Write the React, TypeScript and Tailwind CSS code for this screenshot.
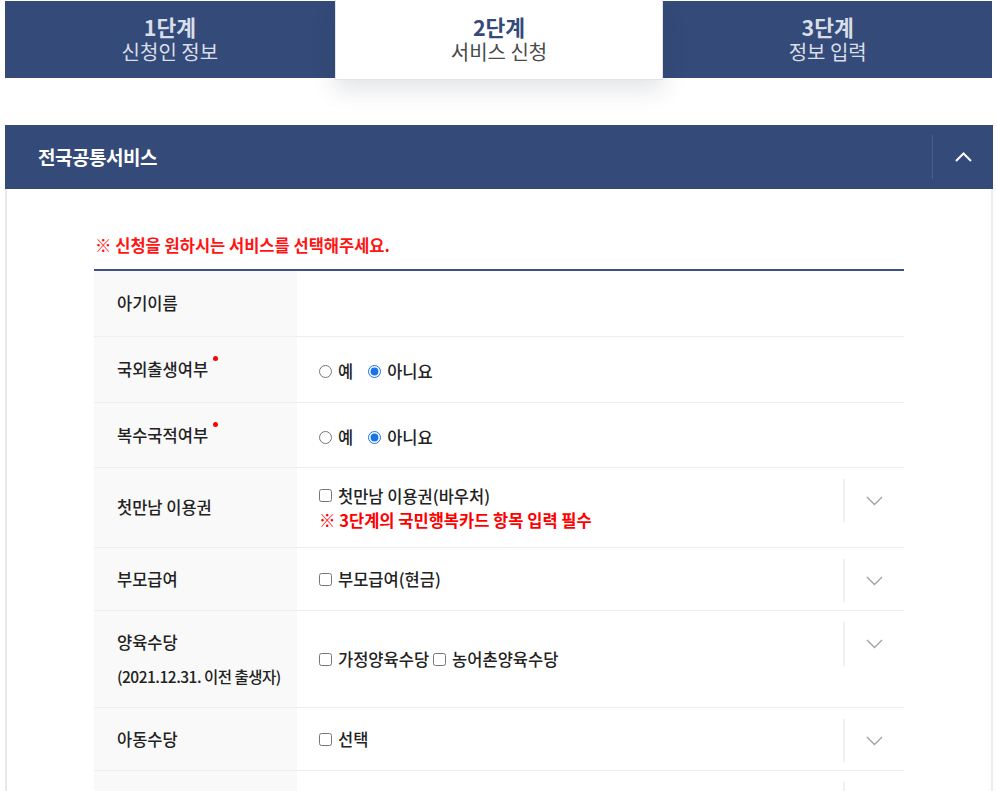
import React from 'react';

const font = "font-['Noto_Sans_CJK_KR','Noto_Sans',sans-serif]";

type Row = {
  label: React.ReactNode;
  required?: boolean;
  h: string;
  content?: React.ReactNode;
  dropdown?: boolean;
};

function Radio({ checked, label, name }: { checked?: boolean; label: string; name: string }) {
  return (
    <label className="flex items-center gap-[6px]">
      <input type="radio" name={name} defaultChecked={checked} className="m-0 h-[13px] w-[13px] accent-[#1a73e8]" />
      <span>{label}</span>
    </label>
  );
}

function Check({ label }: { label: string }) {
  return (
    <label className="flex items-center gap-[6px]">
      <input type="checkbox" className="m-0 h-[13px] w-[13px]" />
      <span>{label}</span>
    </label>
  );
}

function ChevronDown() {
  return (
    <svg width="17" height="10" viewBox="0 0 17 10" fill="none">
      <polyline points="1,1 8.5,8.5 16,1" stroke="#a0a0a0" strokeWidth="1.3" />
    </svg>
  );
}

const rows: Row[] = [
  { label: '아기이름', h: 'h-[66px]' },
  {
    label: '국외출생여부',
    required: true,
    h: 'h-[66px]',
    content: (
      <div className="flex items-center gap-[15px] pt-[4px]">
        <Radio name="r1" label="예" />
        <Radio name="r1" label="아니요" checked />
      </div>
    ),
  },
  {
    label: '복수국적여부',
    required: true,
    h: 'h-[65px]',
    content: (
      <div className="flex items-center gap-[15px] pt-[4px]">
        <Radio name="r2" label="예" />
        <Radio name="r2" label="아니요" checked />
      </div>
    ),
  },
  {
    label: '첫만남 이용권',
    h: 'h-[80px]',
    dropdown: true,
    content: (
      <div className="flex flex-col leading-[24px]">
        <Check label="첫만남 이용권(바우처)" />
        <p className="font-bold text-[#ff0000]">※ 3단계의 국민행복카드 항목 입력 필수</p>
      </div>
    ),
  },
  { label: '부모급여', h: 'h-[63px]', dropdown: true, content: <Check label="부모급여(현금)" /> },
  {
    label: (
      <div className="flex flex-col leading-[34px]">
        <span>양육수당</span>
        <span className="whitespace-nowrap text-[15.5px] tracking-[-0.5px]">(2021.12.31. 이전 출생자)</span>
      </div>
    ),
    h: 'h-[97px]',
    dropdown: true,
    content: (
      <div className="flex items-center gap-[4px]">
        <Check label="가정양육수당" />
        <Check label="농어촌양육수당" />
      </div>
    ),
  },
  { label: '아동수당', h: 'h-[63px]', dropdown: true, content: <Check label="선택" /> },
  { label: '', h: 'h-[63px]', dropdown: true },
];

export default function App() {
  return (
    <div className={`${font} w-[997px] h-[791px] overflow-hidden bg-white`}>
      {/* step tabs */}
      <div className="flex px-[5px] pt-[1px]">
        <div className="flex h-[77px] w-[330px] flex-col items-center justify-center pb-[2px] bg-[#344a78] text-[#d9dee8]">
          <span className="text-[21.5px] font-bold leading-[25px]">1단계</span>
          <span className="text-[20px] leading-[25px]">신청인 정보</span>
        </div>
        <div className="relative z-10 -mt-[1px] flex h-[80px] w-[329px] flex-col items-center justify-center pb-[2px] border border-t-0 border-[#e2e4e8] bg-white shadow-[0_10px_22px_rgba(40,50,80,0.13)]">
          <span className="text-[21.5px] font-bold leading-[25px] text-[#344a78]">2단계</span>
          <span className="text-[20px] leading-[25px] text-[#4a4a4a]">서비스 신청</span>
        </div>
        <div className="flex h-[77px] w-[329px] flex-col items-center justify-center pb-[2px] bg-[#344a78] text-[#d9dee8]">
          <span className="text-[21.5px] font-bold leading-[25px]">3단계</span>
          <span className="text-[20px] leading-[25px]">정보 입력</span>
        </div>
      </div>

      {/* panel */}
      <div className="mx-[5px] mt-[45px] w-[988px]">
        <div className="flex h-[64px] items-center bg-[#344a78]">
          <h2 className="flex-1 pl-[33px] text-[19px] font-bold tracking-[-0.5px] text-white">전국공통서비스</h2>
          <div className="flex h-[44px] w-[61px] items-center justify-center border-l border-[#4a5e88]">
            <svg width="17" height="10" viewBox="0 0 17 10" fill="none">
              <polyline points="1,9 8.5,1.5 16,9" stroke="#ffffff" strokeWidth="2" />
            </svg>
          </div>
        </div>

        <div className="border-x-2 border-l-[#e8e8e8] border-r-[#ececec] px-[87px] pt-[45px] pb-10">
          <p className="pl-[1px] text-[16.5px] font-semibold leading-[22px] text-[#ff1414]">
            ※ 신청을 원하시는 서비스를 선택해주세요.
          </p>

          <div className="mt-[13px] border-t-2 border-[#3d5280] text-[16.5px] font-medium text-[#222]">
            {rows.map((row, i) => (
              <div key={i} className={`grid grid-cols-[203px_1fr] border-b border-[#eeeeee] ${row.h}`}>
                <div className="flex items-center bg-[#f9f9f9] pl-[23px]">
                  {row.required ? (
                    <span className="relative">
                      {row.label}
                      <span className="absolute -right-[10px] -top-[1px] h-[5px] w-[5px] rounded-full bg-[#ff0000]" />
                    </span>
                  ) : (
                    row.label
                  )}
                </div>
                <div className="flex">
                  <div className="flex flex-1 items-center pl-[22px]">{row.content}</div>
                  {row.dropdown && (
                    <div className="mt-[11px] flex h-[44px] w-[61px] items-center justify-center border-l-2 border-[#f2f2f2]">
                      <ChevronDown />
                    </div>
                  )}
                </div>
              </div>
            ))}
          </div>
        </div>
      </div>
    </div>
  );
}
